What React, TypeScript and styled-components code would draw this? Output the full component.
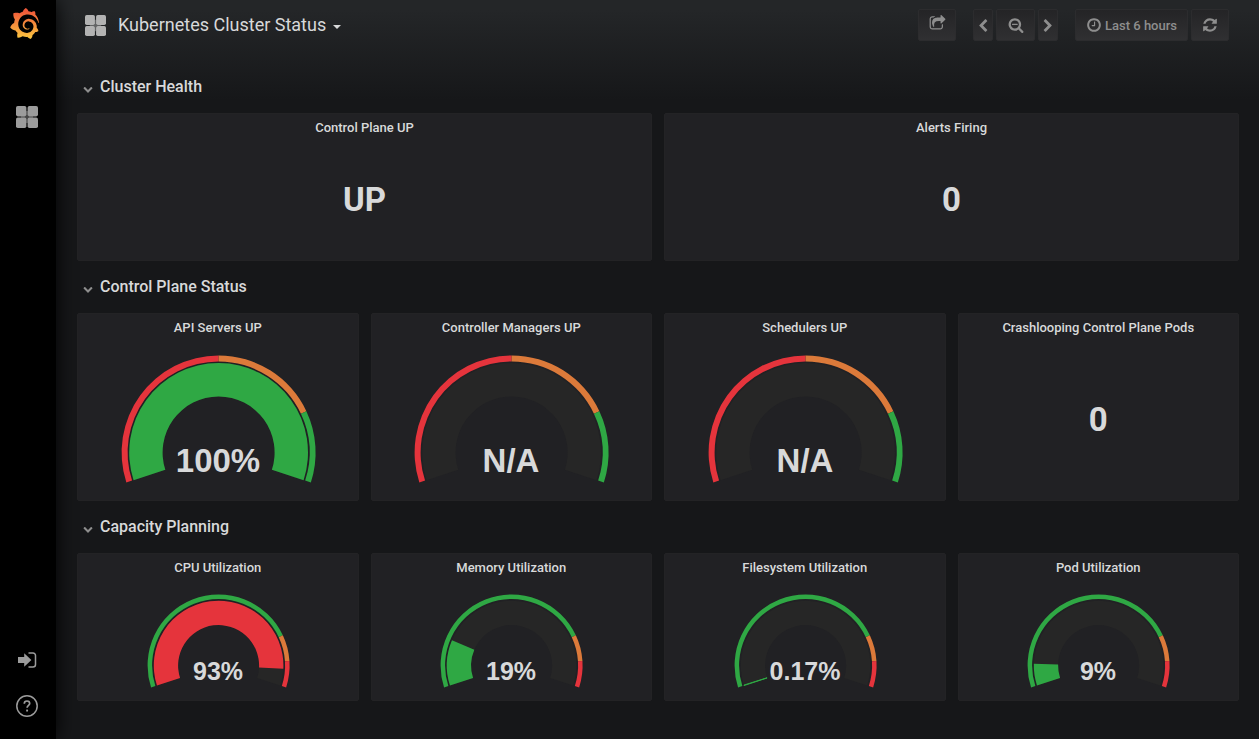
import React from "react";
import styled, { createGlobalStyle } from "styled-components";
import { SiGrafana } from "react-icons/si";

const RED = "#e5343c";
const ORANGE = "#dc7a3a";
const GREEN = "#2fa844";

const GlobalStyle = createGlobalStyle`
  *, *::before, *::after { box-sizing: border-box; }
  body {
    margin: 0;
    background: #161719;
    color: #d8d9da;
    font-family: Roboto, "Liberation Sans", sans-serif;
    font-size: 13px;
  }
  button { font-family: inherit; cursor: pointer; }
`;

const Shell = styled.div`
  display: flex;
  min-height: 100vh;
`;

const Sidebar = styled.nav`
  position: relative;
  z-index: 1;
  display: flex;
  flex-direction: column;
  align-items: center;
  flex: 0 0 56px;
  padding: 8px 2px 22px 0;
  background: #000;
  box-shadow: 0 0 20px #000;
`;

const SideLink = styled.a<{ $gapTop: number; $push?: boolean }>`
  display: flex;
  color: #9c9c9c;
  margin-top: ${(p) => (p.$push ? "auto" : `${p.$gapTop}px`)};
`;

const HomeLink = styled(SideLink)`
  padding-right: 5px;
`;

const Page = styled.div`
  flex: 1;
  min-width: 0;
  background: linear-gradient(180deg, #242628 10px, #161719 100px);
`;

const Toolbar = styled.header`
  display: flex;
  align-items: center;
  height: 50px;
  padding: 0 30px 0 29px;
`;

const TitleButton = styled.button`
  display: flex;
  align-items: center;
  gap: 12px;
  margin-right: auto;
  padding: 0;
  border: 0;
  background: none;
  color: #d8d9da;
  font-size: 18px;
  line-height: 24px;
`;

const Caret = styled.span`
  margin: 4px 0 0 -5px;
  border: 4px solid transparent;
  border-top-color: #d8d9da;
  border-bottom: 0;
`;

const ToolGroup = styled.div`
  display: flex;
  gap: 3px;
  margin-left: 17px;
`;

const ToolButton = styled.button<{ $width: number }>`
  display: flex;
  align-items: center;
  justify-content: center;
  gap: 3px;
  width: ${(p) => p.$width}px;
  height: 32px;
  padding: 0;
  border: 1px solid #2c2c2e;
  border-radius: 2px;
  background: linear-gradient(180deg, #242426, #303032);
  color: #8e8e8e;
  font-size: 13px;
  font-weight: 500;
  white-space: nowrap;
`;

const ShareButton = styled(ToolButton)`
  padding-bottom: 3px;
`;

const ShiftButton = styled(ToolButton)`
  padding-top: 2px;
`;

const Dashboard = styled.main`
  padding: 11px 20px 38px 21px;
`;

const RowTitle = styled.h2`
  display: flex;
  align-items: center;
  height: 52px;
  margin: 0;
  padding-left: 6px;
`;

const RowToggle = styled.button`
  display: flex;
  align-items: center;
  gap: 7px;
  padding: 0;
  border: 0;
  background: none;
  color: #d8d9da;
  font-size: 16px;
  font-weight: 500;
  line-height: 20px;

  svg { margin-top: 3px; color: #8e8e8e; }
`;

const PanelRow = styled.div<{ $columns: number }>`
  display: grid;
  grid-template-columns: repeat(${(p) => p.$columns}, minmax(0, 1fr));
  gap: 12px;
`;

const Panel = styled.section<{ $height: number }>`
  display: flex;
  flex-direction: column;
  min-height: ${(p) => p.$height}px;
  border: 1px solid #232325;
  border-radius: 2px;
  background: #212124;
`;

const PanelTitle = styled.h3`
  margin: 0;
  font-size: 13px;
  font-weight: 500;
  line-height: 28px;
  text-align: center;
`;

const Stat = styled.div`
  display: flex;
  flex: 1;
  align-items: center;
  justify-content: center;
  padding-bottom: 4px;
  font-size: 33px;
  font-weight: 700;
`;

const GaugeSvg = styled.svg`
  display: block;
  margin: 0 auto;
  overflow: visible;
`;

const GaugeValue = styled.text<{ $size: number }>`
  fill: #d8d9da;
  font-family: "Liberation Sans", Arial, sans-serif;
  font-size: ${(p) => p.$size}px;
  font-weight: 700;
  text-anchor: middle;
`;

type IconProps = { d: string; size: number };
const Icon = ({ d, size }: IconProps) => (
  <svg width={size} height={size} viewBox="0 0 1792 1792" fill="currentColor" aria-hidden="true">
    <path d={d} />
  </svg>
);

const icons = {
  share:
    "M1472 989v259q0 119-84.5 203.5t-203.5 84.5h-832q-119 0-203.5-84.5t-84.5-203.5v-832q0-119 84.5-203.5t203.5-84.5h255q13 0 22.5 9.5t9.5 22.5q0 27-26 32-77 26-133 60-10 4-16 4h-112q-66 0-113 47t-47 113v832q0 66 47 113t113 47h832q66 0 113-47t47-113v-214q0-19 18-29 28-13 54-37 16-16 35-8 21 9 21 29zm237-496l-384 384q-18 19-45 19-12 0-25-5-39-17-39-59v-192h-160q-323 0-438 131-119 137-74 473 3 23-20 34-8 2-12 2-16 0-26-13-10-14-21-31t-39.5-68.5-49.5-99.5-38.5-114-17.5-122q0-49 3.5-91t14-90 28-88 47-81.5 68.5-74 94.5-61.5 124.5-48.5 159.5-30.5 196.5-11h160v-192q0-42 39-59 13-5 25-5 26 0 45 19l384 384q19 19 19 45t-19 45z",
  left: "M1427 301l-531 531 531 531q19 19 19 45t-19 45l-166 166q-19 19-45 19t-45-19l-742-742q-19-19-19-45t19-45l742-742q19-19 45-19t45 19l166 166q19 19 19 45t-19 45z",
  right:
    "M1363 877l-742 742q-19 19-45 19t-45-19l-166-166q-19-19-19-45t19-45l531-531-531-531q-19-19-19-45t19-45l166-166q19-19 45-19t45 19l742 742q19 19 19 45t-19 45z",
  down: "M1683 808l-742 741q-19 19-45 19t-45-19l-742-741q-19-19-19-45.5t19-45.5l166-165q19-19 45-19t45 19l531 531 531-531q19-19 45-19t45 19l166 165q19 19 19 45.5t-19 45.5z",
  zoomOut:
    "M1088 800v64q0 13-9.5 22.5t-22.5 9.5h-576q-13 0-22.5-9.5t-9.5-22.5v-64q0-13 9.5-22.5t22.5-9.5h576q13 0 22.5 9.5t9.5 22.5zm128 32q0-185-131.5-316.5t-316.5-131.5-316.5 131.5-131.5 316.5 131.5 316.5 316.5 131.5 316.5-131.5 131.5-316.5zm512 832q0 53-37.5 90.5t-90.5 37.5q-54 0-90-38l-343-342q-179 124-399 124-143 0-273.5-55.5t-225-150-150-225-55.5-273.5 55.5-273.5 150-225 225-150 273.5-55.5 273.5 55.5 225 150 150 225 55.5 273.5q0 220-124 399l343 343q37 37 37 90z",
  clock:
    "M1024 544v448q0 14-9 23t-23 9h-320q-14 0-23-9t-9-23v-64q0-14 9-23t23-9h224v-352q0-14 9-23t23-9h64q14 0 23 9t9 23zm416 352q0-148-73-273t-198-198-273-73-273 73-198 198-73 273 73 273 198 198 273 73 273-73 198-198 73-273zm224 0q0 209-103 385.5t-279.5 279.5-385.5 103-385.5-103-279.5-279.5-103-385.5 103-385.5 279.5-279.5 385.5-103 385.5 103 279.5 279.5 103 385.5z",
  refresh:
    "M1639 1056q0 5-1 7-64 268-268 434.5t-478 166.5q-146 0-282.5-55t-243.5-157l-129 129q-19 19-45 19t-45-19-19-45v-448q0-26 19-45t45-19h448q26 0 45 19t19 45-19 45l-137 137q71 66 161 102t187 36q134 0 250-65t186-179q11-17 53-117 8-23 30-23h192q13 0 22.5 9.5t9.5 22.5zm25-800v448q0 26-19 45t-45 19h-448q-26 0-45-19t-19-45 19-45l138-138q-148-137-349-137-134 0-250 65t-186 179q-11 17-53 117-8 23-30 23h-199q-13 0-22.5-9.5t-9.5-22.5v-7q65-268 270-434.5t480-166.5q146 0 284 55.5t245 156.5l130-129q19-19 45-19t45 19 19 45z",
};

const TilesIcon = ({ size, color }: { size: number; color: string }) => (
  <svg width={size} height={size} viewBox="0 0 22 22" fill={color} aria-hidden="true">
    <path d="M10 5h2v12h-2zM5 10h12v2H5z" opacity="0.45" />
    <rect x="0" y="0" width="10.4" height="10.4" rx="1.8" />
    <rect x="11.6" y="0" width="10.4" height="10.4" rx="1.8" />
    <rect x="0" y="11.6" width="10.4" height="10.4" rx="1.8" />
    <rect x="11.6" y="11.6" width="10.4" height="10.4" rx="1.8" />
  </svg>
);

const GrafanaLogo = () => (
  <>
    <svg width="0" height="0" aria-hidden="true">
      <defs>
        <linearGradient id="flame" x1="0" y1="0" x2="0" y2="1">
          <stop offset="0.1" stopColor="#f05a3a" />
          <stop offset="0.5" stopColor="#f58a3c" />
          <stop offset="1" stopColor="#fbc840" />
        </linearGradient>
      </defs>
    </svg>
    <SiGrafana size={31} fill="url(#flame)" aria-hidden="true" />
  </>
);

const SignInIcon = () => (
  <svg width="19" height="16" viewBox="0 0 19 16" fill="currentColor" aria-hidden="true">
    <path d="M0 5h6.200V1.200L13.400 8L6.200 14.800V11H0z" />
    <path d="M10.500 1H15a2.500 2.500 0 0 1 2.500 2.500v9A2.500 2.500 0 0 1 15 15h-4.500" fill="none" stroke="currentColor" strokeWidth="1.500" />
  </svg>
);

const HelpIcon = () => (
  <svg width="22" height="22" viewBox="0 0 22 22" fill="none" stroke="currentColor" aria-hidden="true">
    <circle cx="11" cy="11" r="10.200" strokeWidth="1.500" />
    <path d="M8.300 8.800V8.500a2.700 2.500 0 0 1 5.400 0c0 1.900-2.600 2-2.600 4.300" strokeWidth="1.700" />
    <path d="M11.100 14.600v1.900" strokeWidth="1.900" />
  </svg>
);

type Step = { to: number; color: string };
type GaugeSize = { radius: number; ring: number; outer: number; inner: number; font: number; baseline: number; top: number };

const LARGE: GaugeSize = { radius: 97, ring: 6, outer: 89.4, inner: 56, font: 33, baseline: 20, top: 13 };
const SMALL: GaugeSize = { radius: 71, ring: 4.5, outer: 64.8, inner: 40.5, font: 25, baseline: 15, top: 12 };

/* The dial sweeps 216 degrees, starting 18 degrees below the horizontal. */
const arc = (r1: number, r2: number, from: number, to: number) => {
  const angle = (f: number) => Math.PI * (0.9 + 1.2 * f);
  const at = (r: number, f: number) => `${(r * Math.cos(angle(f))).toFixed(2)} ${(r * Math.sin(angle(f))).toFixed(2)}`;
  const large = (to - from) * 1.2 > 1 ? 1 : 0;
  return `M${at(r1, from)}A${r1} ${r1} 0 ${large} 1 ${at(r1, to)}L${at(r2, to)}A${r2} ${r2} 0 ${large} 0 ${at(r2, from)}Z`;
};

type GaugeProps = { size: GaugeSize; steps: Step[]; value: number; color: string; label: string };
const Gauge = ({ size, steps, value, color, label }: GaugeProps) => {
  const { radius: r, ring, outer, inner } = size;
  const height = Math.ceil(r * 1.31);
  return (
    <GaugeSvg
      width={2 * r}
      height={height + size.top}
      viewBox={`${-r} ${-r - size.top} ${2 * r} ${height + size.top}`}
      role="img"
      aria-label={label}
    >
      <g transform="translate(0.6 0.5)">
        <path d={arc(outer, inner, 0, 1)} fill="#262626" />
        {value > 0 && <path d={arc(outer, inner, 0, value)} fill={color} stroke={color} strokeWidth={value < 0.01 ? 1 : 0} />}
        {steps.map((s, i) => (
          <path key={s.to} d={arc(r, r - ring, i ? steps[i - 1].to : 0, s.to)} fill={s.color} />
        ))}
      </g>
      <GaugeValue $size={size.font} x={0} y={size.baseline}>
        {label}
      </GaugeValue>
    </GaugeSvg>
  );
};

const upSteps: Step[] = [
  { to: 0.5, color: RED },
  { to: 0.8, color: ORANGE },
  { to: 1, color: GREEN },
];
const loadSteps: Step[] = [
  { to: 0.8, color: GREEN },
  { to: 0.9, color: ORANGE },
  { to: 1, color: RED },
];

type PanelData = { title: string; label: string; value?: number; color?: string };
type RowData = { title: string; height: number; size: GaugeSize; steps: Step[]; panels: PanelData[] };

const rows: RowData[] = [
  {
    title: "Cluster Health",
    height: 148,
    size: LARGE,
    steps: upSteps,
    panels: [
      { title: "Control Plane UP", label: "UP" },
      { title: "Alerts Firing", label: "0" },
    ],
  },
  {
    title: "Control Plane Status",
    height: 188,
    size: LARGE,
    steps: upSteps,
    panels: [
      { title: "API Servers UP", label: "100%", value: 1, color: GREEN },
      { title: "Controller Managers UP", label: "N/A", value: 0 },
      { title: "Schedulers UP", label: "N/A", value: 0 },
      { title: "Crashlooping Control Plane Pods", label: "0" },
    ],
  },
  {
    title: "Capacity Planning",
    height: 148,
    size: SMALL,
    steps: loadSteps,
    panels: [
      { title: "CPU Utilization", label: "93%", value: 0.93, color: RED },
      { title: "Memory Utilization", label: "19%", value: 0.19, color: GREEN },
      { title: "Filesystem Utilization", label: "0.17%", value: 0.0017, color: GREEN },
      { title: "Pod Utilization", label: "9%", value: 0.09, color: GREEN },
    ],
  },
];

export default function App() {
  return (
    <>
      <GlobalStyle />
      <Shell>
        <Sidebar aria-label="Main">
          <HomeLink href="#home" aria-label="Home" $gapTop={0}>
            <GrafanaLogo />
          </HomeLink>
          <SideLink href="#dashboards" aria-label="Dashboards" $gapTop={67}>
            <TilesIcon size={22} color="#9c9c9c" />
          </SideLink>
          <SideLink href="#login" aria-label="Sign in" $gapTop={0} $push>
            <SignInIcon />
          </SideLink>
          <SideLink href="#help" aria-label="Help" $gapTop={27}>
            <HelpIcon />
          </SideLink>
        </Sidebar>
        <Page>
          <Toolbar>
            <TitleButton type="button">
              <TilesIcon size={21} color="#b3b3b3" />
              Kubernetes Cluster Status
              <Caret />
            </TitleButton>
            <ToolGroup>
              <ShareButton type="button" $width={38} aria-label="Share dashboard">
                <Icon d={icons.share} size={17} />
              </ShareButton>
            </ToolGroup>
            <ToolGroup>
              <ShiftButton type="button" $width={20} aria-label="Shift time back">
                <Icon d={icons.left} size={14} />
              </ShiftButton>
              <ToolButton type="button" $width={39} aria-label="Zoom out">
                <Icon d={icons.zoomOut} size={16} />
              </ToolButton>
              <ShiftButton type="button" $width={20} aria-label="Shift time forward">
                <Icon d={icons.right} size={14} />
              </ShiftButton>
            </ToolGroup>
            <ToolGroup>
              <ToolButton type="button" $width={113}>
                <Icon d={icons.clock} size={16} />
                Last 6 hours
              </ToolButton>
              <ToolButton type="button" $width={38} aria-label="Refresh">
                <Icon d={icons.refresh} size={16} />
              </ToolButton>
            </ToolGroup>
          </Toolbar>
          <Dashboard>
            {rows.map((row) => (
              <section key={row.title}>
                <RowTitle>
                  <RowToggle type="button" aria-expanded="true">
                    <Icon d={icons.down} size={10} />
                    {row.title}
                  </RowToggle>
                </RowTitle>
                <PanelRow $columns={row.panels.length}>
                  {row.panels.map((p) => (
                    <Panel key={p.title} $height={row.height}>
                      <PanelTitle>{p.title}</PanelTitle>
                      {p.value === undefined ? (
                        <Stat>{p.label}</Stat>
                      ) : (
                        <Gauge
                          size={row.size}
                          steps={row.steps}
                          value={p.value}
                          color={p.color ?? GREEN}
                          label={p.label}
                        />
                      )}
                    </Panel>
                  ))}
                </PanelRow>
              </section>
            ))}
          </Dashboard>
        </Page>
      </Shell>
    </>
  );
}
